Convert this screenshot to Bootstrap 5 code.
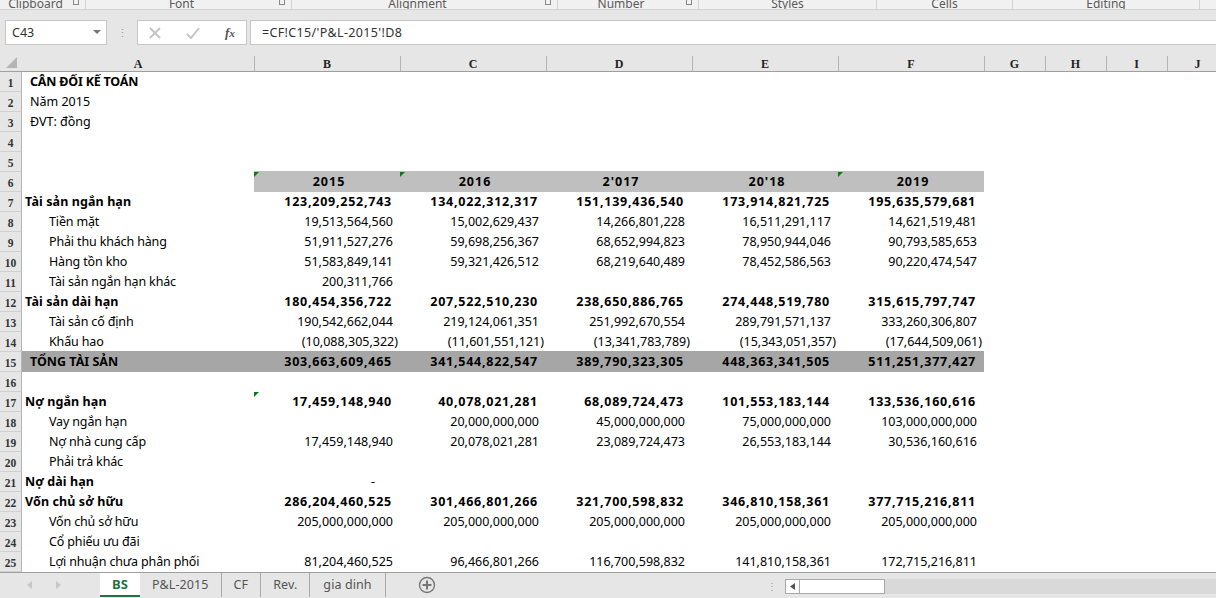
<!DOCTYPE html>
<html lang="vi">
<head>
<meta charset="utf-8">
<title>Excel</title>
<link href="https://cdn.jsdelivr.net/npm/bootstrap@5.3.0/dist/css/bootstrap.min.css" rel="stylesheet">
<style>
html,body{height:598px;overflow:hidden;background:#fff}
body{font-family:"Noto Sans","Liberation Sans",sans-serif;font-size:12.5px;color:#000}
.xl-app{width:1216px;height:598px}
.xl-ribbon{height:10px;background:#f1f1f1;border-bottom:1px solid #d2d2d2;overflow:hidden;position:relative;flex:none}
.xl-group{height:9px;border-right:1px solid #d4d4d4;color:#5a5a5a;font-size:12px;line-height:7px;text-align:center;flex:none;position:relative}
.xl-g-l{padding-right:14px}
.xl-launch{position:absolute;right:6px;top:0;width:6px;height:5px;border:1px solid #888;border-top:0}
.xl-fbar{height:36px;background:#e6e6e6;padding:10px 0 1px 5px;flex:none}
.xl-namebox{width:102px;height:25px;background:#fff;border:1px solid #c6c6c6;font-size:12.5px;line-height:24px;padding-left:6px;position:relative;color:#333;flex:none}
.xl-namebox::after{content:"";position:absolute;right:5px;top:9px;border:4px solid transparent;border-top:4px solid #777;border-bottom:0}
.xl-dots{width:30px;flex:none;text-align:center;color:#999;font-size:11px;line-height:25px}
.xl-fxbox{width:110px;height:25px;background:#fff;border:1px solid #c6c6c6;flex:none;padding:0 11px}
.xl-fxt{font-family:"Liberation Serif",serif;font-style:italic;font-weight:700;font-size:13px;color:#555}
.xl-formula{flex:1;height:25px;margin-left:3px;background:#fff;border:1px solid #c6c6c6;border-right:0;padding-left:11px;line-height:24px;color:#333;font-size:12.5px;letter-spacing:.35px}
.xl-sheetwrap{height:526px;overflow:hidden;flex:none}
.xl-sheet{table-layout:fixed;border-collapse:separate;border-spacing:0;width:1228px}
.xl-sheet th,.xl-sheet td{padding:0;white-space:nowrap;overflow:visible;position:relative}
.xl-sheet thead th{height:26px;background:#e6e6e6;border-bottom:1px solid #9f9f9f;font-family:"Liberation Serif",serif;font-weight:700;font-size:12px;text-align:center;vertical-align:bottom;line-height:16px;color:#222}
.xl-sheet thead th span{display:block;height:15px;line-height:16px;border-right:1px solid #b4b4b4;margin-right:-1px;position:relative;z-index:1}
.xl-sheet thead th.xl-corner::after{content:"";position:absolute;right:5px;bottom:3px;border-style:solid;border-width:0 0 11px 11px;border-color:transparent transparent #b5b5b5 transparent}
.xl-sheet tbody tr{height:20px}
.xl-sheet tbody th{background:#e6e6e6;border-right:1px solid #b4b4b4;border-bottom:1px solid #d0d0d0;font-family:"Liberation Serif",serif;font-weight:700;font-size:11.5px;color:#333;text-align:center;line-height:15px;padding-top:4px;height:20px}
.xl-sheet td{height:20px;line-height:18px;vertical-align:top;padding-top:1px;padding-bottom:1px}
.xl-num{text-align:right;padding-right:7px!important}
.xl-b{font-weight:700}
.xl-num.xl-b{padding-right:8px!important;letter-spacing:.75px}
.xl-in{padding-left:27px!important;letter-spacing:-.15px}
.xl-lab{padding-left:3px!important;letter-spacing:.1px}
.xl-ttl{padding-left:8px!important}
.xl-ttl.xl-b:not(.xl-tot){letter-spacing:-.2px}
.xl-yr{background:#bfbfbf;box-shadow:0 -1px 0 #bfbfbf;text-align:center;font-weight:700;letter-spacing:1px;padding-left:4px!important}
.xl-tot{background:#a6a6a6;box-shadow:0 -1px 0 #a6a6a6}
.xl-neg{padding-right:2px!important}
.xl-dash{padding-right:25px!important}
.xl-tick::before{content:"";position:absolute;left:0;top:0;border-style:solid;border-width:5px 5px 0 0;border-color:#0a7a12 transparent transparent transparent}
.xl-tabs{height:26px;background:#e6e6e6;border-top:1px solid #9f9f9f;flex:none;position:relative;color:#444}
.xl-navs{width:100px;height:24px;flex:none;gap:24px;padding-left:27px}
.xl-tab{height:24px;line-height:23px;padding:0 12px;flex:none;border-right:1px solid #aaa;font-size:12.5px;color:#555;letter-spacing:.1px}
.xl-tab-on{background:#fff;color:#217346;font-weight:700;width:40px;padding:0;text-align:center;border-right:0;border-bottom:2px solid #217346;font-size:13px}
.xl-tab-end{padding:0 13px}
.xl-add{width:18px;height:18px;margin:3px 0 0 32px;flex:none}
.xl-scrollarea{position:absolute;left:767px;right:0;top:6px;height:15px}
.xl-grip{width:4px;color:#999;line-height:15px;font-size:10px}
.xl-track{position:absolute;left:18px;right:0;top:0;height:15px;background:#d9d9d9}
.xl-sbtn{width:15px;height:15px;background:#fff;border:1px solid #a9a9a9;position:absolute;left:0;top:0}
.xl-thumb{width:86px;height:15px;background:#fff;border:1px solid #a9a9a9;position:absolute;left:14px;top:0}
.xl-w1{width:86px}.xl-w2{width:206px}.xl-w3{width:266px}.xl-w4{width:141px}.xl-w5{width:178px}.xl-w6{width:136px}.xl-w7{width:187px}
.xl-ca{width:22px}.xl-cb{width:232px}.xl-cn{width:146px}.xl-cs{width:61px}
</style>
</head>
<body>
<div class="xl-app d-flex flex-column">
  <div class="xl-ribbon d-flex">
    <div class="xl-group xl-g-l xl-w1">Clipboard<i class="xl-launch"></i></div>
    <div class="xl-group xl-g-l xl-w2">Font<i class="xl-launch"></i></div>
    <div class="xl-group xl-g-l xl-w3">Alignment<i class="xl-launch"></i></div>
    <div class="xl-group xl-g-l xl-w4">Number<i class="xl-launch"></i></div>
    <div class="xl-group xl-w5">Styles</div>
    <div class="xl-group xl-w6">Cells</div>
    <div class="xl-group xl-w7">Editing</div>
  </div>
  <div class="xl-fbar d-flex">
    <div class="xl-namebox">C43</div>
    <div class="xl-dots">⋮</div>
    <div class="xl-fxbox d-flex align-items-center justify-content-between">
      <svg width="12" height="12" viewBox="0 0 12 12"><path d="M1 1l10 10M11 1L1 11" stroke="#c4c4c4" stroke-width="2"/></svg>
      <svg width="14" height="12" viewBox="0 0 14 12"><path d="M1 7l4 4 8-10" fill="none" stroke="#c4c4c4" stroke-width="2"/></svg>
      <span class="xl-fxt">f<small>x</small></span>
    </div>
    <div class="xl-formula">=CF!C15/'P&amp;L-2015'!D8</div>
  </div>
  <div class="xl-sheetwrap">
    <table class="xl-sheet">
      <colgroup>
        <col class="xl-ca"><col class="xl-cb"><col class="xl-cn"><col class="xl-cn"><col class="xl-cn"><col class="xl-cn"><col class="xl-cn"><col class="xl-cs"><col class="xl-cs"><col class="xl-cs"><col class="xl-cs">
      </colgroup>
      <thead>
        <tr><th class="xl-corner"></th><th><span>A</span></th><th><span>B</span></th><th><span>C</span></th><th><span>D</span></th><th><span>E</span></th><th><span>F</span></th><th><span>G</span></th><th><span>H</span></th><th><span>I</span></th><th><span>J</span></th></tr>
      </thead>
      <tbody id="xl-rows"></tbody>
    </table>
  </div>
  <div class="xl-tabs d-flex align-items-start">
    <div class="xl-navs d-flex align-items-center">
      <svg width="5" height="8" viewBox="0 0 5 8"><path d="M5 0v8L0 4z" fill="#c6c6c6"/></svg>
      <svg width="5" height="8" viewBox="0 0 5 8"><path d="M0 0v8l5-4z" fill="#c6c6c6"/></svg>
    </div>
    <div class="xl-tab xl-tab-on">BS</div>
    <div class="xl-tab">P&amp;L-2015</div>
    <div class="xl-tab">CF</div>
    <div class="xl-tab">Rev.</div>
    <div class="xl-tab xl-tab-end">gia dinh</div>
    <svg class="xl-add" viewBox="0 0 18 18"><circle cx="9" cy="9" r="7.500" fill="none" stroke="#777" stroke-width="1.400"/><path d="M9 4.500v9M4.500 9h9" stroke="#777" stroke-width="2"/></svg>
    <div class="xl-scrollarea">
      <div class="xl-grip">⋮</div>
      <div class="xl-track">
        <div class="xl-sbtn"><svg width="13" height="13" viewBox="0 0 13 13" class="d-block"><path d="M9 3v7L4 6.500z" fill="#555"/></svg></div>
        <div class="xl-thumb"></div>
      </div>
    </div>
  </div>
</div>
<script>
var R=[
[1,'t','CÂN ĐỐI KẾ TOÁN',[],1],
[2,'t','Năm 2015',[]],
[3,'t','ĐVT: đồng',[]],
[4,'',''],[5,'',''],
[6,'y'],
[7,'b','Tài sản ngắn hạn',['123,209,252,743','134,022,312,317','151,139,436,540','173,914,821,725','195,635,579,681']],
[8,'i','Tiền mặt',['19,513,564,560','15,002,629,437','14,266,801,228','16,511,291,117','14,621,519,481']],
[9,'i','Phải thu khách hàng',['51,911,527,276','59,698,256,367','68,652,994,823','78,950,944,046','90,793,585,653']],
[10,'i','Hàng tồn kho',['51,583,849,141','59,321,426,512','68,219,640,489','78,452,586,563','90,220,474,547']],
[11,'i','Tài sản ngắn hạn khác',['200,311,766','','','','']],
[12,'b','Tài sản dài hạn',['180,454,356,722','207,522,510,230','238,650,886,765','274,448,519,780','315,615,797,747']],
[13,'i','Tài sản cố định',['190,542,662,044','219,124,061,351','251,992,670,554','289,791,571,137','333,260,306,807']],
[14,'i','Khấu hao',['(10,088,305,322)','(11,601,551,121)','(13,341,783,789)','(15,343,051,357)','(17,644,509,061)']],
[15,'T','TỔNG TÀI SẢN',['303,663,609,465','341,544,822,547','389,790,323,305','448,363,341,505','511,251,377,427']],
[16,'',''],
[17,'b','Nợ ngắn hạn',['17,459,148,940','40,078,021,281','68,089,724,473','101,553,183,144','133,536,160,616']],
[18,'i','Vay ngắn hạn',['','20,000,000,000','45,000,000,000','75,000,000,000','103,000,000,000']],
[19,'i','Nợ nhà cung cấp',['17,459,148,940','20,078,021,281','23,089,724,473','26,553,183,144','30,536,160,616']],
[20,'i','Phải trả khác',['','','','','']],
[21,'b','Nợ dài hạn',['-','','','','']],
[22,'b','Vốn chủ sở hữu',['286,204,460,525','301,466,801,266','321,700,598,832','346,810,158,361','377,715,216,811']],
[23,'i','Vốn chủ sở hữu',['205,000,000,000','205,000,000,000','205,000,000,000','205,000,000,000','205,000,000,000']],
[24,'i','Cổ phiếu ưu đãi',['','','','','']],
[25,'i','Lợi nhuận chưa phân phối',['81,204,460,525','96,466,801,266','116,700,598,832','141,810,158,361','172,715,216,811']]
];
var Y=['2015','2016',"2'017","20'18",'2019'],h='';
R.forEach(function(r){
  var n=r[0],k=r[1],s='<tr><th>'+n+'</th>';
  if(k==='y'){
    s+='<td></td>';
    Y.forEach(function(y,i){s+='<td class="xl-yr'+(i==0||i==1||i==4?' xl-tick':'')+'">'+y+'</td>';});
  }else{
    var c=k==='b'?'xl-lab xl-b':k==='i'?'xl-in':k==='t'?'xl-ttl':k==='T'?'xl-ttl xl-b xl-tot':'';
    if(r[4])c+=' xl-b';
    s+='<td class="'+c+'">'+(r[2]||'')+'</td>';
    for(var i=0;i<5;i++){
      var v=(r[3]||[])[i]||'';
      var d='xl-num';
      if(v==='-')d='xl-num xl-dash';
      else if(k==='b'||k==='T')d+=' xl-b';
      if(k==='T')d+=' xl-tot';
      if(n===14)d+=' xl-neg';
      if(n===17&&i===0)d+=' xl-tick';
      s+='<td class="'+d+'">'+v+'</td>';
    }
  }
  s+='<td></td><td></td><td></td><td></td>';
  h+=s+'</tr>';
});
document.getElementById('xl-rows').innerHTML=h;
</script>
<script src="https://cdn.jsdelivr.net/npm/bootstrap@5.3.0/dist/js/bootstrap.bundle.min.js"></script>
</body>
</html>
